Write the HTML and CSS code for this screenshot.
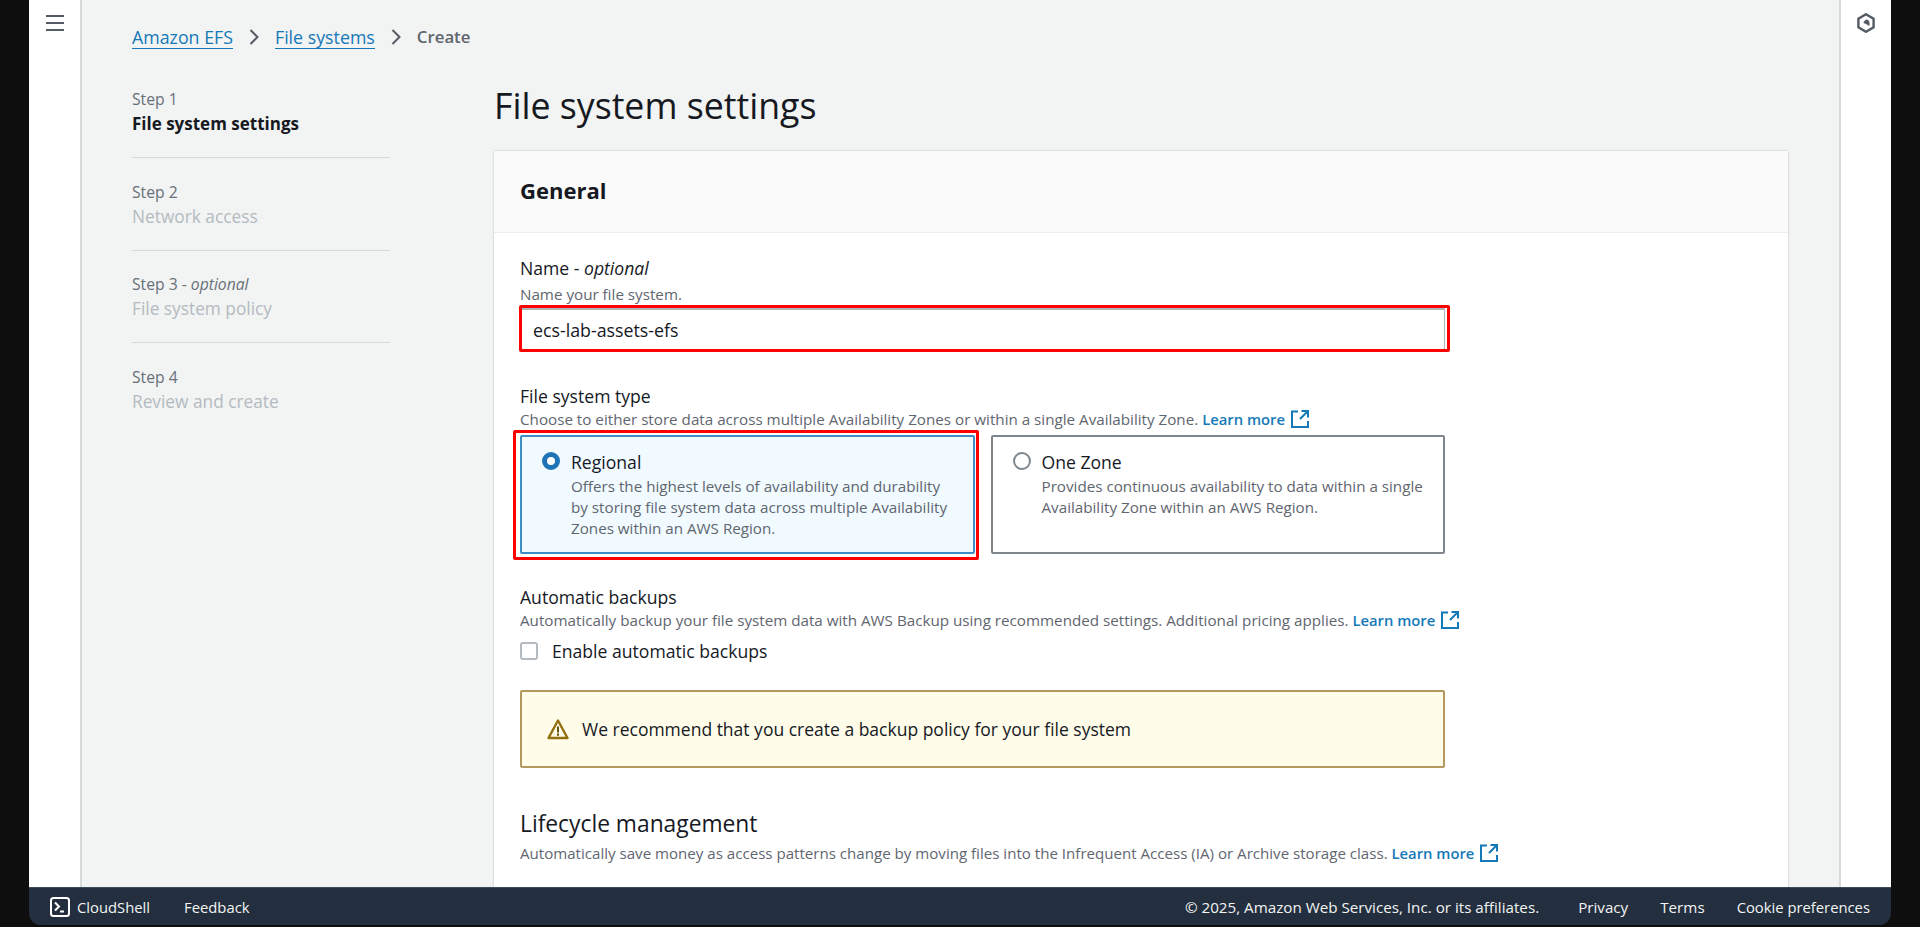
FILE: index.html
```html
<!DOCTYPE html>
<html lang="en">
<head>
    <meta charset="UTF-8">
    <meta name="viewport" content="width=device-width, initial-scale=1">
    <title>Create file system</title>
    <link rel="stylesheet" href="styles.css">
</head>
<body>
    <div class="app">
        <div class="main">
            <aside class="rail rail-left">
                <svg class="menu-icon" viewBox="0 0 18 16"><path d="M0 1h18M0 8h18M0 15h18" fill="none" stroke="#545b64" stroke-width="2"/></svg>
            </aside>
            <main class="content">
                <nav class="crumbs">
                    <a href="#">Amazon EFS</a>
                    <svg class="crumb-sep" viewBox="0 0 10 16"><path d="M1.5 1l7 7-7 7" fill="none" stroke="#545b64" stroke-width="2"/></svg>
                    <a href="#">File systems</a>
                    <svg class="crumb-sep" viewBox="0 0 10 16"><path d="M1.5 1l7 7-7 7" fill="none" stroke="#545b64" stroke-width="2"/></svg>
                    <span class="crumb-current">Create</span>
                </nav>
                <div class="wizard">
                    <ul class="steps">
                        <li class="step">
                            <div class="step-no">Step 1</div>
                            <div class="step-name active">File system settings</div>
                        </li>
                        <li class="step">
                            <div class="step-no">Step 2</div>
                            <div class="step-name">Network access</div>
                        </li>
                        <li class="step">
                            <div class="step-no">Step 3 - <i>optional</i></div>
                            <div class="step-name">File system policy</div>
                        </li>
                        <li class="step">
                            <div class="step-no">Step 4</div>
                            <div class="step-name">Review and create</div>
                        </li>
                    </ul>
                    <div class="form">
                        <h1>File system settings</h1>
                        <section class="card">
                            <div class="card-head"><h2>General</h2></div>
                            <div class="card-body">
                                <div class="label">Name - <i>optional</i></div>
                                <div class="hint">Name your file system.</div>
                                <div class="input-wrap">
                                    <input class="text-input" type="text" value="ecs-lab-assets-efs">
                                    <span class="mark mark-input"></span>
                                </div>

                                <div class="label label-type">File system type</div>
                                <div class="hint">Choose to either store data across multiple Availability Zones or within a single Availability Zone. <a class="learn" href="#">Learn more</a>
                                    <svg class="ext" viewBox="0 0 18 18"><path d="M7 1.500H1v15.500h16V11M10.500 1h6.500v6.500M16.500 1.500L9 9" fill="none" stroke="#1579b8" stroke-width="2"/></svg></div>
                                <div class="tiles">
                                    <div class="tile selected">
                                        <span class="radio on"></span>
                                        <div>
                                            <div class="tile-title">Regional</div>
                                            <div class="tile-text">Offers the highest levels of availability and durability by storing file system data across multiple Availability Zones within an AWS Region.</div>
                                        </div>
                                        <span class="mark mark-tile"></span>
                                    </div>
                                    <div class="tile">
                                        <span class="radio"></span>
                                        <div>
                                            <div class="tile-title">One Zone</div>
                                            <div class="tile-text">Provides continuous availability to data within a single Availability Zone within an AWS Region.</div>
                                        </div>
                                    </div>
                                </div>

                                <div class="label label-backup">Automatic backups</div>
                                <div class="hint">Automatically backup your file system data with AWS Backup using recommended settings. Additional pricing applies. <a class="learn" href="#">Learn more</a>
                                    <svg class="ext" viewBox="0 0 18 18"><path d="M7 1.500H1v15.500h16V11M10.500 1h6.500v6.500M16.500 1.500L9 9" fill="none" stroke="#1579b8" stroke-width="2"/></svg></div>
                                <div class="check-row"><span class="checkbox"></span>Enable automatic backups</div>

                                <div class="alert">
                                    <svg class="warn" viewBox="0 0 22 22"><path d="M11 2.500L1.500 20h19z" fill="none" stroke="#93700f" stroke-width="2.400" stroke-linejoin="round"/><path d="M11 8.500v6M11 15.500v2.200" fill="none" stroke="#6b5213" stroke-width="2"/></svg>
                                    We recommend that you create a backup policy for your file system
                                </div>

                                <h3>Lifecycle management</h3>
                                <div class="hint hint-lifecycle">Automatically save money as access patterns change by moving files into the Infrequent Access (IA) or Archive storage class. <a class="learn" href="#">Learn more</a>
                                    <svg class="ext" viewBox="0 0 18 18"><path d="M7 1.500H1v15.500h16V11M10.500 1h6.500v6.500M16.500 1.500L9 9" fill="none" stroke="#1579b8" stroke-width="2"/></svg></div>
                                <div class="lifecycle-row">
                                    <div class="label">Transition into Infrequent Access (IA)</div>
                                    <div class="label">Transition into Archive</div>
                                    <div class="label">Transition into Standard</div>
                                </div>
                            </div>
                        </section>
                    </div>
                </div>
            </main>
            <aside class="rail rail-right">
                <svg class="rail-icon" viewBox="0 0 20 20"><path d="M10 1.200l7.600 4.400v8.800L10 18.800l-7.600-4.400V5.600z" fill="none" stroke="#545b64" stroke-width="2.400"/><path d="M10 6.500a3.500 3.500 0 0 1 3.500 3.500L13.500 13 9 10.500A1.500 1.500 0 0 1 7.500 9z" fill="#545b64"/></svg>
            </aside>
        </div>
        <footer class="footer">
            <div class="footer-left">
                <span class="shell">
                    <svg class="shell-icon" viewBox="0 0 20 20"><rect x="1" y="1" width="18" height="18" rx="2.500" fill="none" stroke="#fff" stroke-width="2"/><path d="M5 5.500l4 4-4 4M10 14.500h4" fill="none" stroke="#fff" stroke-width="2"/></svg>
                    CloudShell
                </span>
                <span>Feedback</span>
            </div>
            <div class="footer-right">
                <span class="copyright">© 2025, Amazon Web Services, Inc. or its affiliates.</span>
                <span>Privacy</span>
                <span>Terms</span>
                <span class="cookie">Cookie preferences</span>
            </div>
        </footer>
    </div>
</body>
</html>
```

FILE: styles.css
```css
* {
    box-sizing: border-box;
}
html, body {
    margin: 0;
    height: 100%;
    overflow: hidden;
}
body {
    background: #0e0e0e;
    font-family: "Open Sans", "Noto Sans", sans-serif;
    font-size: 15.2px;
    color: #16191f;
    padding: 0 29px 2px;
}
.app {
    height: 100%;
    display: flex;
    flex-direction: column;
    border-radius: 0 0 12px 12px;
    overflow: hidden;
}
.main {
    flex: 1;
    min-height: 0;
    display: flex;
    background: #fff;
}
.rail {
    width: 52px;
    flex: none;
    padding-top: 13px;
    display: flex;
    justify-content: center;
    align-items: flex-start;
}
.rail-left {
    width: 53px;
    border-right: 2px solid #d5dbdb;
    padding-top: 15px;
}
.rail-right {
    border-left: 2px solid #d5dbdb;
}
.menu-icon {
    width: 18px;
    height: 16px;
}
.rail-icon {
    width: 20px;
    height: 20px;
}
.content {
    flex: 1;
    min-width: 0;
    background: #f2f3f3;
    padding: 0 51px 0 50px;
    overflow: hidden;
}
.crumbs {
    height: 74px;
    display: flex;
    align-items: center;
    font-size: 17.8px;
}
.crumbs a {
    color: #1579b8;
    text-decoration: none;
    border-bottom: 1.5px solid #1579b8;
    line-height: 22px;
}
.crumb-sep {
    width: 10px;
    height: 16px;
    margin: 0 16px;
}
.crumb-current {
    color: #5f666d;
    font-size: 16.8px;
    font-weight: 600;
    margin-bottom: 1px;
}
.wizard {
    display: flex;
}
.steps {
    width: 258px;
    flex: none;
    margin: 14px 104px 0 0;
    padding: 0;
    list-style: none;
}
.step {
    height: 70px;
    margin-bottom: 22.5px;
    border-bottom: 1.5px solid #d5dbdb;
}
.step:last-child {
    border-bottom: none;
}
.step-no {
    color: #687078;
    font-size: 15.7px;
    line-height: 22px;
}
.step-name {
    color: #b4bbc0;
    font-size: 17.3px;
    line-height: 26px;
    margin-top: 1px;
}
.step-name.active {
    color: #16191f;
    font-size: 17px;
    font-weight: 700;
}
.form {
    flex: 1;
    min-width: 0;
}
h1 {
    margin: 8px 0 23px;
    font-size: 35.7px;
    line-height: 46px;
    font-weight: 400;
    color: #16191f;
}
.card {
    background: #fff;
    box-shadow: 0 0 2px rgba(0, 21, 41, 0.25);
}
.card-head {
    height: 82px;
    background: #fafafa;
    border-bottom: 1px solid #eaeded;
    padding: 0 26px 4px;
    display: flex;
    align-items: center;
}
h2 {
    margin: 0;
    font-size: 22px;
    font-weight: 700;
}
.card-body {
    padding: 23px 26px;
}
.label {
    font-size: 17.6px;
    line-height: 24px;
}
.hint {
    font-size: 15.2px;
    line-height: 22px;
    margin-top: 3px;
    color: #5f6670;
}
.hint-lifecycle {
    font-size: 15.1px;
    margin-top: 3px;
}
.learn {
    color: #1579b8;
    font-size: 14.8px;
    font-weight: 600;
    text-decoration: none;
}
.ext {
    width: 18px;
    height: 18px;
    margin-left: 2px;
    vertical-align: -3px;
}
.input-wrap {
    position: relative;
    width: 925px;
    margin-top: 3px;
}
.text-input {
    display: block;
    width: 100%;
    height: 42px;
    border: 1px solid #aab7b8;
    border-top-width: 2px;
    padding: 0 12px;
    font: inherit;
    font-size: 17.8px;
    color: #16191f;
    background: #fff;
    outline: none;
}
.mark {
    position: absolute;
    border: 3px solid #fe0000;
    border-radius: 2px;
    pointer-events: none;
}
.mark-input {
    inset: -3px -5px -2px -1px;
}
.mark-tile {
    inset: -7px -6px -8px -9px;
}
.label-type {
    margin-top: 34px;
}
.label-type + .hint, .label-backup + .hint {
    margin-top: 0;
}
.tiles {
    display: flex;
    gap: 16px;
    width: 925px;
    margin-top: 5px;
}
.tile {
    position: relative;
    flex: 1;
    height: 119px;
    display: flex;
    gap: 11px;
    padding: 13px 20px;
    border: 2px solid #7f868c;
    border-radius: 2px;
    background: #fff;
}
.tile.selected {
    background: #f1faff;
    border-color: #3d8ec4;
}
.radio {
    width: 18px;
    height: 18px;
    flex: none;
    margin-top: 2px;
    border: 2px solid #7f868c;
    border-radius: 50%;
    background: #fff;
}
.radio.on {
    border: 5px solid #1f73b7;
}
.tile-title {
    font-size: 17.6px;
    line-height: 24px;
}
.tile-text {
    font-size: 15.2px;
    line-height: 20.8px;
    margin-top: 2px;
    color: #5f6670;
}
.label-backup {
    margin-top: 31px;
}
.check-row {
    display: flex;
    align-items: center;
    gap: 14px;
    margin-top: 8px;
    font-size: 17.6px;
    line-height: 24px;
}
.checkbox {
    width: 18px;
    height: 18px;
    border: 2px solid #b4bbc0;
    border-radius: 3px;
}
.alert {
    width: 925px;
    height: 78px;
    margin-top: 27px;
    display: flex;
    align-items: center;
    gap: 13px;
    padding: 0 25px;
    background: #fffce9;
    border: 2px solid #b5985e;
    border-radius: 2px;
    font-size: 17.5px;
}
.warn {
    width: 22px;
    height: 22px;
}
h3 {
    margin: 41px 0 0;
    font-size: 22.8px;
    line-height: 30px;
    font-weight: 400;
}
.lifecycle-row {
    display: grid;
    grid-template-columns: repeat(3, 1fr);
    gap: 16px;
    width: 925px;
    margin-top: 20px;
}
.footer {
    height: 38px;
    flex: none;
    background: #232f3e;
    border-top: 1px solid #3c4a5a;
    color: #f2f3f3;
    display: flex;
    justify-content: space-between;
    align-items: center;
    padding: 0 21px;
    font-size: 15.2px;
}
.footer-left, .footer-right {
    display: flex;
    align-items: center;
}
.footer-left {
    gap: 34px;
    font-size: 14.8px;
}
.footer-right {
    gap: 32px;
}
.copyright {
    margin-right: 7px;
}
.cookie {
    font-size: 14.8px;
}
.shell {
    display: flex;
    align-items: center;
    gap: 7px;
}
.shell-icon {
    width: 20px;
    height: 20px;
}
```
